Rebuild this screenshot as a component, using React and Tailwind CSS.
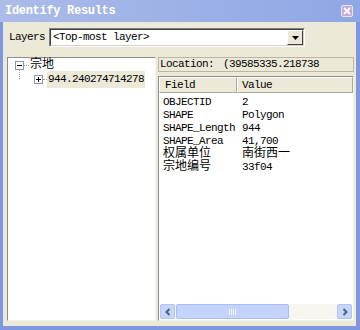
import React from 'react'

const MONO = "font-['Liberation_Mono','Noto_Sans_CJK_SC',monospace]"

const rows = [
  ['OBJECTID', '2'],
  ['SHAPE', 'Polygon'],
  ['SHAPE_Length', '944'],
  ['SHAPE_Area', '41,700'],
  ['权属单位', '南街西一'],
  ['宗地编号', '33f04'],
]

const isCjk = (s) => /[\u4e00-\u9fff]/.test(s)

function Cell({ text, className = '' }) {
  return (
    <span
      className={`${className} whitespace-nowrap ${MONO} ${
        isCjk(text) ? 'text-[12px] tracking-[0px]' : 'text-[11px] tracking-[-0.6px]'
      }`}
    >
      {text}
    </span>
  )
}

function TreeBox({ open }) {
  return (
    <div className="relative w-[9px] h-[9px] border border-[#8c97a5] bg-white flex items-center justify-center">
      <div className="w-[5px] h-px bg-black" />
      {!open && <div className="absolute w-px h-[5px] bg-black" />}
    </div>
  )
}

function Chevron({ dir }) {
  return (
    <svg width="8" height="8" viewBox="0 0 8 8">
      <path
        d={dir === 'left' ? 'M5.5 1 L2.5 4 L5.5 7' : 'M2.5 1 L5.5 4 L2.5 7'}
        fill="none"
        stroke="#4d6185"
        strokeWidth="2"
      />
    </svg>
  )
}

export default function App() {
  return (
    <div className="w-[360px] h-[330px] flex flex-col bg-[#7e97df] overflow-hidden">
      {/* caption */}
      <div className="h-[22px] shrink-0 flex items-center justify-between pl-[5px] pr-[7px] bg-gradient-to-r from-[#acbbe8] to-[#8ea7e6]">
        <span className={`text-white font-bold text-[12px] tracking-[-0.3px] ${MONO}`}>Identify Results</span>
        <div className="w-[12px] h-[12px] rounded-[2px] border border-[#eee6f5] bg-[#c5a8dc] flex items-center justify-center">
          <svg width="8" height="8" viewBox="0 0 8 8">
            <path d="M1 1 L7 7 M7 1 L1 7" stroke="white" strokeWidth="1.8" />
          </svg>
        </div>
      </div>

      {/* body */}
      <div className="flex-1 ml-[3px] mr-[4px] mb-[4px] bg-[#ece9d8] flex flex-col">
        <div className="mt-[6px] h-[19px] flex items-center pl-[6px]">
          <span className={`w-[40px] text-[11px] tracking-[-0.6px] text-black ${MONO}`}>Layers</span>
          <div className="w-[256px] h-[19px] flex border-t border-l border-[#808080] border-b border-r border-b-white border-r-white">
            <div className="flex-1 flex items-center bg-white border-t border-l border-[#404040] border-b border-r border-b-[#d4d0c8] border-r-[#d4d0c8]">
              <span className={`pl-[2px] text-[11px] tracking-[-0.6px] text-black ${MONO}`}>&lt;Top-most layer&gt;</span>
              <div className="ml-auto w-[16px] h-full bg-[#ece9d8] flex items-center justify-center border-t border-l border-white border-b border-r border-b-[#404040] border-r-[#404040]">
                <svg width="7" height="4" viewBox="0 0 7 4">
                  <path d="M0 0 H7 L3.5 4 Z" fill="black" />
                </svg>
              </div>
            </div>
          </div>
        </div>

        <div className="mt-[10px] flex pl-[4px] gap-[2px]">
          {/* tree */}
          <div className="w-[149px] h-[264px] bg-white border-t border-l border-[#8d8d8d] border-b border-r border-b-[#f4f3ee] border-r-[#f4f3ee]">
            <div className="relative">
              <div className="flex items-center h-[14px] pl-[7px]">
                <TreeBox open />
                <div className="w-[5px] border-t border-dotted border-[#9a9a9a]" />
                <Cell text="宗地" className="pl-[1px] text-black" />
              </div>
              <div className="absolute left-[11px] top-[12px] h-[9px] border-l border-dotted border-[#9a9a9a]" />
              <div className="flex items-center h-[15px] pl-[26px]">
                <TreeBox open={false} />
                <div className="w-[4px] border-t border-dotted border-[#9a9a9a]" />
                <Cell text="944.240274714278" className="px-[1px] bg-[#ece9d8] text-black" />
              </div>
            </div>
          </div>

          {/* right side */}
          <div className="w-[196px] flex flex-col">
            <div className="h-[15px] flex items-center border border-[#b9b6a6] bg-[#ece9d8] pl-[1px]">
              <Cell text="Location:" className="text-black" />
              <Cell text="(39585335.218738" className="ml-[9px] text-black" />
            </div>

            <div className="mt-[4px] h-[245px] flex flex-col bg-white border-t border-l border-[#8d8d8d] border-b border-r border-b-[#f4f3ee] border-r-[#f4f3ee]">
              <div className="h-[16px] flex shrink-0 bg-[#ece9d8]">
                <div className="w-[78px] flex items-center pl-[5px] border-t border-l border-white border-b border-r border-b-[#aca899] border-r-[#aca899]">
                  <Cell text="Field" className="text-black" />
                </div>
                <div className="flex-1 flex items-center pl-[4px] border-t border-l border-white border-b border-r border-b-[#aca899] border-r-[#aca899]">
                  <Cell text="Value" className="text-black" />
                </div>
              </div>
              <div className="flex-1 -mt-[1px]">
                {rows.map(([f, v]) => (
                  <div key={f} className="h-[13px] flex items-center">
                    <div className="w-[78px] pl-[4px]">
                      <Cell text={f} className="text-black" />
                    </div>
                    <div className="pl-[5px]">
                      <Cell text={v} className="text-black" />
                    </div>
                  </div>
                ))}
              </div>
              {/* horizontal scrollbar */}
              <div className="h-[15px] mb-[1px] mx-[1px] flex items-center bg-[#f6f5f0] gap-[1px]">
                <div className="w-[15px] h-[15px] rounded-[2px] border border-[#b3c4ef] bg-[#c6d5fb] flex items-center justify-center">
                  <Chevron dir="left" />
                </div>
                <div className="w-[113px] h-[15px] rounded-[2px] border border-[#a8bdf1] bg-[#c4d3fb] flex items-center justify-center gap-[1px]">
                  {[0, 1, 2, 3].map((i) => (
                    <div key={i} className="w-px h-[6px] bg-[#eef3ff]" />
                  ))}
                </div>
                <div className="flex-1" />
                <div className="w-[15px] h-[15px] rounded-[2px] border border-[#b3c4ef] bg-[#c6d5fb] flex items-center justify-center">
                  <Chevron dir="right" />
                </div>
              </div>
            </div>
          </div>
        </div>
      </div>
    </div>
  )
}
